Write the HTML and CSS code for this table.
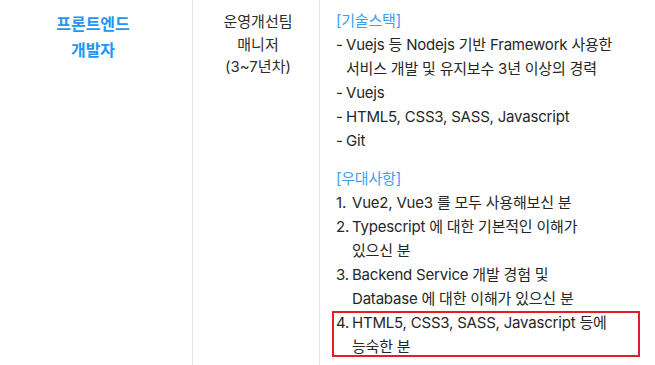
FILE: index.html
```html
<!DOCTYPE html>
<html lang="ko">
<head>
<meta charset="utf-8">
<link rel="stylesheet" href="styles.css">
</head>
<body>
<div class="row">
  <div class="col col-title">
    <p class="job">프론트엔드<br>개발자</p>
  </div>
  <div class="col col-role">
    <p class="role">운영개선팀<br>매니저<br>(3~7년차)</p>
  </div>
  <div class="col col-desc">
    <p class="head">[기술스택]</p>
    <ul class="list">
      <li><span class="mk dash">-</span><span class="tx">Vuejs 등 Nodejs 기반 Framework 사용한<br>서비스 개발 및 유지보수 3년 이상의 경력</span></li>
      <li><span class="mk dash">-</span><span class="tx">Vuejs</span></li>
      <li><span class="mk dash">-</span><span class="tx">HTML5, CSS3, SASS, Javascript</span></li>
      <li><span class="mk dash">-</span><span class="tx">Git</span></li>
    </ul>
    <p class="head head-2">[우대사항]</p>
    <ul class="list">
      <li><span class="mk num">1.</span><span class="tx">Vue2, Vue3 를 모두 사용해보신 분</span></li>
      <li><span class="mk num">2.</span><span class="tx">Typescript 에 대한 기본적인 이해가<br>있으신 분</span></li>
      <li><span class="mk num">3.</span><span class="tx">Backend Service 개발 경험 및<br>Database 에 대한 이해가 있으신 분</span></li>
      <li class="marked"><span class="mk num">4.</span><span class="tx">HTML5, CSS3, SASS, Javascript 등에<br>능숙한 분</span><span class="redbox"></span></li>
    </ul>
  </div>
</div>
</body>
</html>
```

FILE: styles.css
```css
html, body {
  margin: 0;
  padding: 0;
  background: #ffffff;
}
body {
  width: 655px;
  height: 365px;
  overflow: hidden;
  font-family: Inter, "Noto Sans CJK KR", sans-serif;
  color: #262626;
}
p, ul {
  margin: 0;
  padding: 0;
}
.row {
  display: flex;
  height: 365px;
}
.col {
  box-sizing: border-box;
}
.col-title {
  width: 193px;
  border-right: 1px solid #e6e6e6;
  padding-top: 11px;
  text-align: center;
}
.job {
  font-size: 16px;
  font-weight: 700;
  line-height: 26px;
  color: #2196f3;
  padding-right: 6px;
}
.col-role {
  width: 127px;
  border-right: 1px solid #e6e6e6;
  padding-top: 11px;
  text-align: center;
}
.role {
  font-size: 15px;
  line-height: 22.5px;
  color: #2e2e2e;
  padding-left: 4px;
}
.col-desc {
  flex: 1;
  padding: 9px 16px 0 16px;
  font-size: 15px;
  line-height: 24px;
  letter-spacing: -0.2px;
}
.head {
  color: #3a9ff2;
}
.head-2 {
  margin-top: 14px;
}
.list {
  list-style: none;
}
.list li {
  display: flex;
  position: relative;
}
.mk {
  flex: none;
}
.mk.dash {
  width: 10px;
}
.mk.num {
  width: 16px;
}
.redbox {
  position: absolute;
  left: -4px;
  top: 0;
  width: 304px;
  height: 42px;
  border: 2px solid #e51d27;
}
```
